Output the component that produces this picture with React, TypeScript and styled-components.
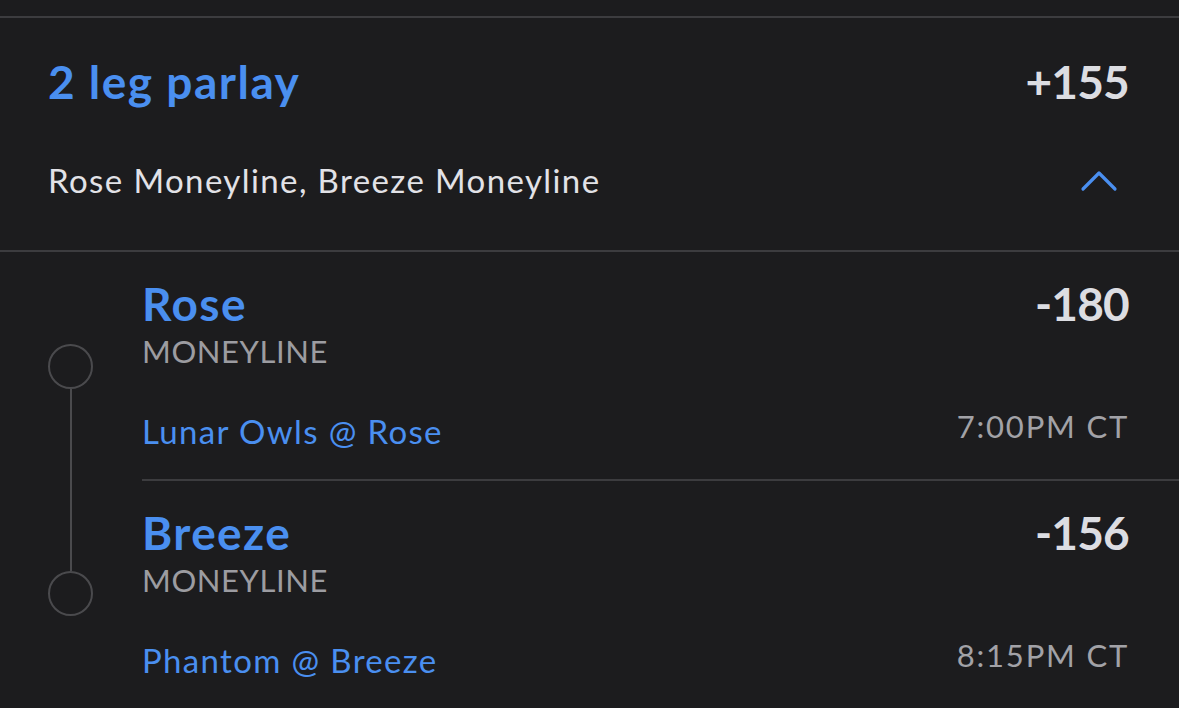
import styled, { createGlobalStyle } from "styled-components";

const GlobalStyle = createGlobalStyle`
  html, body {
    margin: 0;
    background: #1c1c1e;
  }
  body {
    font-family: Lato, "Noto Sans", sans-serif;
    -webkit-font-smoothing: antialiased;
  }
`;

const legs = [
  { name: "Rose", odds: "-180", market: "MONEYLINE", matchup: "Lunar Owls @ Rose", time: "7:00PM CT" },
  { name: "Breeze", odds: "-156", market: "MONEYLINE", matchup: "Phantom @ Breeze", time: "8:15PM CT" },
];

const BLUE = "#4a8ff0";
const LINE = "#3c3c3f";

const Screen = styled.main`
  width: 1179px;
  height: 708px;
  overflow: hidden;
  padding-top: 16px;
  box-sizing: border-box;
  background: #1c1c1e;
`;

const Card = styled.section`
  border-top: 2px solid ${LINE};
`;

const Header = styled.header`
  display: grid;
  gap: 59px;
  padding: 41px 50px 53px 48px;
  border-bottom: 2px solid ${LINE};
`;

const Row = styled.div`
  display: flex;
  align-items: center;
  justify-content: space-between;
`;

const Title = styled.h1`
  margin: 0;
  font-size: 46px;
  line-height: 46px;
  font-weight: 700;
  letter-spacing: 1.5px;
  color: ${BLUE};
`;

const Odds = styled.span`
  font-size: 46px;
  line-height: 46px;
  font-weight: 700;
  letter-spacing: -0.8px;
  color: #dcdde2;
`;

const Summary = styled.p`
  margin: 0;
  font-size: 33px;
  line-height: 33px;
  letter-spacing: 1.4px;
  color: #e2e2e7;
`;

const Chevron = styled.svg`
  width: 36px;
  height: 22px;
  margin-right: 12px;
  overflow: visible;
`;

const LegsBlock = styled.div`
  display: flex;
  gap: 49px;
  padding-left: 48px;
`;

const Timeline = styled.div`
  display: flex;
  flex-direction: column;
  align-items: center;
  width: 45px;
  padding-top: 92px;
`;

const Node = styled.div`
  width: 45px;
  height: 45px;
  box-sizing: border-box;
  border: 2px solid #4a4a4d;
  border-radius: 50%;
`;

const Rail = styled.div`
  width: 2px;
  height: 182px;
  background: #4a4a4d;
`;

const LegList = styled.div`
  flex: 1;
`;

const Leg = styled.article<{ $last?: boolean }>`
  display: grid;
  padding: 29px 50px 31px 0;
  border-bottom: ${({ $last }) => ($last ? "none" : `2px solid ${LINE}`)};
`;

const LegName = styled.h2`
  margin: 0;
  font-size: 46px;
  line-height: 46px;
  font-weight: 700;
  letter-spacing: 1.4px;
  color: ${BLUE};
`;

const Market = styled.div`
  margin-top: 9px;
  font-size: 31px;
  line-height: 31px;
  letter-spacing: 0.6px;
  color: #9c9ca1;
`;

const MatchRow = styled(Row)`
  align-items: flex-start;
  margin-top: 48px;
`;

const Matchup = styled.span`
  font-size: 33px;
  line-height: 33px;
  letter-spacing: 1.35px;
  color: ${BLUE};
`;

const Time = styled.span`
  margin-top: -4px;
  font-size: 31px;
  line-height: 31px;
  letter-spacing: 1.8px;
  color: #a2a2a7;
`;

export default function App() {
  return (
    <Screen>
      <GlobalStyle />
      <Card>
        <Header>
          <Row>
            <Title>2 leg parlay</Title>
            <Odds>+155</Odds>
          </Row>
          <Row>
            <Summary>Rose Moneyline, Breeze Moneyline</Summary>
            <Chevron viewBox="0 0 36 22">
              <path d="M2 19 L18 3 L34 19" fill="none" stroke={BLUE} strokeWidth="3.2" strokeLinecap="round" strokeLinejoin="round" />
            </Chevron>
          </Row>
        </Header>
        <LegsBlock>
          <Timeline>
            <Node />
            <Rail />
            <Node />
          </Timeline>
          <LegList>
            {legs.map((leg, i) => (
              <Leg key={leg.name} $last={i === legs.length - 1}>
                <Row>
                  <LegName>{leg.name}</LegName>
                  <Odds>{leg.odds}</Odds>
                </Row>
                <Market>{leg.market}</Market>
                <MatchRow>
                  <Matchup>{leg.matchup}</Matchup>
                  <Time>{leg.time}</Time>
                </MatchRow>
              </Leg>
            ))}
          </LegList>
        </LegsBlock>
      </Card>
    </Screen>
  );
}
